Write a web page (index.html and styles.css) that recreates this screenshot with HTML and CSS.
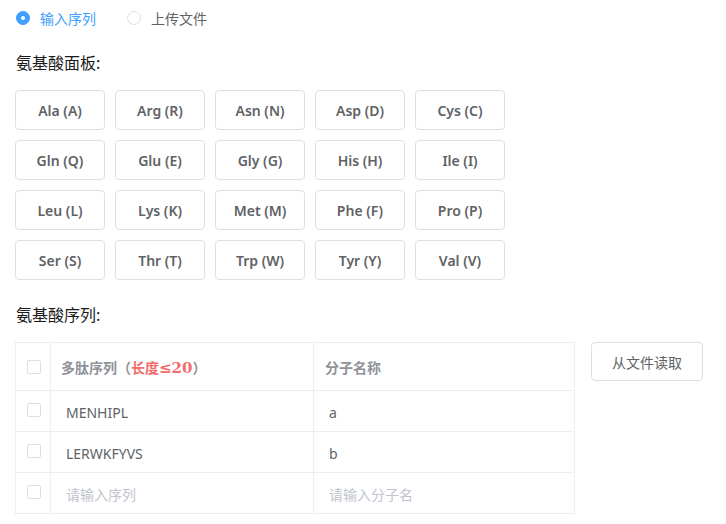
FILE: index.html
```html
<!DOCTYPE html>
<html>
<head>
<meta charset="utf-8">
<link rel="stylesheet" href="styles.css">
</head>
<body>
<div class="page">
  <div class="radios">
    <label class="radio checked"><span class="dot"></span><span class="rtext">输入序列</span></label>
    <label class="radio"><span class="dot"></span><span class="rtext">上传文件</span></label>
  </div>
  <div class="label">氨基酸面板:</div>
  <div class="panel">
    <button class="aa">Ala (A)</button>
    <button class="aa">Arg (R)</button>
    <button class="aa">Asn (N)</button>
    <button class="aa">Asp (D)</button>
    <button class="aa">Cys (C)</button>
    <button class="aa">Gln (Q)</button>
    <button class="aa">Glu (E)</button>
    <button class="aa">Gly (G)</button>
    <button class="aa">His (H)</button>
    <button class="aa">Ile (I)</button>
    <button class="aa">Leu (L)</button>
    <button class="aa">Lys (K)</button>
    <button class="aa">Met (M)</button>
    <button class="aa">Phe (F)</button>
    <button class="aa">Pro (P)</button>
    <button class="aa">Ser (S)</button>
    <button class="aa">Thr (T)</button>
    <button class="aa">Trp (W)</button>
    <button class="aa">Tyr (Y)</button>
    <button class="aa">Val (V)</button>
  </div>
  <div class="label label2">氨基酸序列:</div>
  <div class="seqarea">
    <div class="table">
      <div class="row head">
        <div class="cell c1"><span class="box"></span></div>
        <div class="cell c2"><span class="htext">多肽序列（<span class="red">长度<span class="num">≤20</span></span>）</span></div>
        <div class="cell c3"><span class="htext">分子名称</span></div>
      </div>
      <div class="row">
        <div class="cell c1"><span class="box"></span></div>
        <div class="cell c2"><span class="val">MENHIPL</span></div>
        <div class="cell c3"><span class="val">a</span></div>
      </div>
      <div class="row">
        <div class="cell c1"><span class="box"></span></div>
        <div class="cell c2"><span class="val">LERWKFYVS</span></div>
        <div class="cell c3"><span class="val">b</span></div>
      </div>
      <div class="row last">
        <div class="cell c1"><span class="box"></span></div>
        <div class="cell c2"><span class="val ph">请输入序列</span></div>
        <div class="cell c3"><span class="val ph">请输入分子名</span></div>
      </div>
    </div>
    <button class="readbtn">从文件读取</button>
  </div>
</div>
</body>
</html>
```
FILE: styles.css
```css
* { box-sizing: border-box; }
body {
  margin: 0;
  background: #fff;
  font-family: "Noto Sans", "Noto Sans CJK SC", sans-serif;
  color: #606266;
}
.page {
  padding: 8px 15px 0 15px;
}
.radios {
  display: flex;
  height: 20px;
  align-items: center;
  padding-left: 1px;
}
.radio {
  display: flex;
  align-items: center;
  margin-right: 31px;
  font-size: 14px;
  color: #606266;
}
.radio .dot {
  width: 14px;
  height: 14px;
  border-radius: 50%;
  border: 1px solid #dcdfe6;
  background: #fff;
  margin-right: 10px;
  position: relative;
}
.radio.checked .dot {
  background: #409eff;
  border-color: #409eff;
}
.radio.checked .dot::after {
  content: "";
  position: absolute;
  width: 4px;
  height: 4px;
  border-radius: 50%;
  background: #fff;
  left: 4px;
  top: 4px;
}
.radio.checked .rtext { color: #409eff; }
.rtext { font-family: "Noto Sans CJK SC", sans-serif; }
.label {
  margin-top: 22px;
  height: 24px;
  line-height: 24px;
  font-size: 16px;
  color: #1a1a1a;
  font-family: "Noto Sans CJK SC", sans-serif;
  padding-left: 1px;
}
.panel {
  margin-top: 16px;
  display: grid;
  grid-template-columns: repeat(5, 90px);
  grid-auto-rows: 40px;
  gap: 10px;
}
.aa {
  border: 1px solid #dcdfe6;
  border-radius: 4px;
  background: #fff;
  font-family: "Noto Sans", sans-serif;
  font-weight: 600;
  font-size: 14px;
  color: #606266;
  padding: 0;
}
.label2 { margin-top: 22px; }
.seqarea {
  margin-top: 16px;
  display: flex;
  align-items: flex-start;
}
.table {
  width: 560px;
  border: 1px solid #ebeef5;
  border-bottom: none;
}
.row {
  display: flex;
  height: 41px;
  border-bottom: 1px solid #ebeef5;
}
.row.head { height: 48px; }
.cell {
  display: flex;
  align-items: center;
}
.c1 {
  width: 35px;
  justify-content: center;
  border-right: 1px solid #ebeef5;
  padding-left: 2px;
}
.c2 {
  width: 263px;
  border-right: 1px solid #ebeef5;
  padding-left: 10px;
}
.c3 {
  flex: 1;
  padding-left: 11px;
}
.box {
  width: 14px;
  height: 14px;
  border: 1px solid #dcdfe6;
  border-radius: 2px;
  background: #fff;
  margin-top: -2px;
}
.head .box { margin-top: 0; }
.htext {
  font-family: "Noto Sans CJK SC", sans-serif;
  font-weight: 700;
  font-size: 14px;
  color: #909399;
}
.red { color: #f56c6c; }
.num { font-family: "DejaVu Serif", serif; font-weight: 700; font-size: 15px; }
.val {
  font-size: 14px;
  color: #606266;
  padding-left: 5px;
  padding-top: 2px;
  font-family: "Noto Sans", "Noto Sans CJK SC", sans-serif;
}
.c3 .val { padding-left: 4px; }
.val.ph { color: #c0c4cc; font-family: "Noto Sans CJK SC", sans-serif; }
.readbtn {
  margin-left: 16px;
  width: 112px;
  height: 39px;
  border: 1px solid #dcdfe6;
  border-radius: 4px;
  background: #fff;
  font-family: "Noto Sans CJK SC", sans-serif;
  font-size: 14px;
  color: #606266;
  padding: 0;
}
```
